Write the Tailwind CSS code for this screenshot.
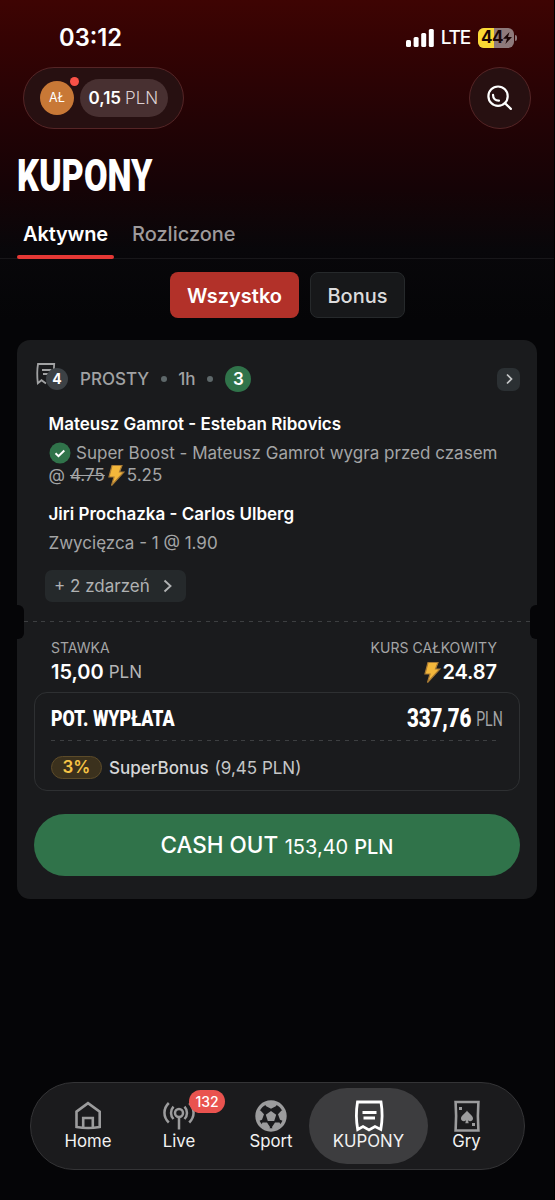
<!DOCTYPE html>
<html lang="pl">
<head>
<meta charset="utf-8">
<title>Kupony</title>
<script src="https://cdn.jsdelivr.net/npm/@tailwindcss/browser@4"></script>
</head>
<body class="bg-[#060608]">
<div class="relative flex h-[1200px] w-[555px] flex-col overflow-hidden border-r border-black bg-[linear-gradient(180deg,#3e0403_0px,#350303_40px,#230305_120px,#150306_190px,#08070a_250px,#050507_320px,#050507_100%)] font-['Inter',sans-serif] text-white">

  <!-- status bar -->
  <div class="flex h-[67px] items-center justify-between pt-[8px] pr-[37px] pl-[59px]">
    <span class="text-[23.700px] font-semibold leading-none">03:12</span>
    <div class="flex items-center">
      <svg class="h-[18px] w-[28px]" viewBox="0 0 28 18" fill="#fff"><rect x="0" y="11" width="5" height="7" rx="1.5"/><rect x="7.6" y="8" width="5" height="10" rx="1.5"/><rect x="15.2" y="4" width="5" height="14" rx="1.5"/><rect x="22.8" y="0" width="5" height="18" rx="1.5"/></svg>
      <span class="ml-[7px] text-[19px] font-medium leading-none tracking-[-1.200px]">LTE</span>
      <div class="relative ml-[8px] flex h-[20px] w-[36px] items-center overflow-hidden rounded-[6px] bg-[#8e7a7b]">
        <div class="h-full w-[16px] bg-[#fbd934]"></div>
        <span class="absolute left-[3px] text-[17px] font-bold leading-none tracking-[-0.500px] text-[#1a0505]">44</span>
        <svg class="absolute left-[25px] top-[4px] h-[12px] w-[9px]" viewBox="0 0 9 12" fill="#1a0505"><path d="M6.5 0 0 6.8h4L2.4 12 9 5H5z"/></svg>
      </div>
      <div class="ml-[1px] h-[6px] w-[2px] rounded-r-full bg-[#8e7a7b]"></div>
    </div>
  </div>

  <!-- account and search -->
  <div class="flex h-[62px] items-center justify-between pr-[23px] pl-[23px]">
    <div class="flex h-[62px] w-[161px] items-center rounded-full border border-[#552526] bg-[#271011] pl-[16px]">
      <div class="relative flex size-[34px] items-center justify-center rounded-full bg-[#c87836]">
        <span class="text-[12.5px] leading-none">AŁ</span>
        <div class="absolute -top-[4px] left-[30px] size-[9px] rounded-full bg-[#fa5147]"></div>
      </div>
      <div class="ml-[6px] flex h-[38px] w-[88px] items-center rounded-full bg-[#483031] pl-[8.500px] leading-none">
        <span class="text-[17px] font-semibold">0,15</span>
        <span class="ml-[4px] text-[17px] font-light text-[#dccfd0]">PLN</span>
      </div>
    </div>
    <div class="flex size-[62px] items-center justify-center rounded-full border border-[#552526] bg-[#271011]">
      <svg class="-mt-[1px] -ml-[1px] size-[27px]" viewBox="0 0 28 28" fill="none" stroke="#fff" stroke-width="2.3"><circle cx="12.5" cy="12.6" r="10"/><path d="m19.6 19.8 6.2 6M7.3 11.3c0 4 2.6 6.1 6.1 5.9" stroke-linecap="round"/></svg>
    </div>
  </div>

  <h1 class="flex h-[93px] items-center pl-[16.500px]"><span class="origin-left scale-x-76 font-['Roboto',sans-serif] text-[45px] font-black leading-none">KUPONY</span></h1>

  <!-- tabs -->
  <div class="-mt-[13px] flex h-[50px] shrink-0 border-b border-[#18171a] pl-[17px]">
    <div class="flex h-[50px] w-[97px] flex-col items-center justify-between pt-[15px]">
      <span class="text-[20px] font-semibold leading-none tracking-[-0.150px]">Aktywne</span>
      <div class="h-[4px] w-full rounded-full bg-[#e53835]"></div>
    </div>
    <div class="ml-[18px] pt-[15px]"><span class="block text-[20px] font-medium leading-none text-[#9e9a9b]">Rozliczone</span></div>
  </div>

  <!-- filters -->
  <div class="flex h-[81px] items-start pt-[13px] pl-[170px]">
    <div class="flex h-[46px] w-[129px] items-center justify-center rounded-[8px] bg-[#b23129] pt-[2px]"><span class="text-[20px] font-semibold">Wszystko</span></div>
    <div class="ml-[11px] flex h-[46px] w-[95px] items-center justify-center rounded-[8px] border border-[#26292b] bg-[#17181a] pt-[2px]"><span class="text-[20px] font-medium text-[#dcdcdd]">Bonus</span></div>
  </div>

  <!-- coupon -->
  <section class="relative ml-[17px] flex h-[559px] w-[520px] shrink-0 flex-col rounded-[13px] bg-[#1a1b1d] px-[17px] pt-[19px]">
    <header class="flex h-[40px] items-center">
      <div class="relative h-[32px] w-[35px]">
        <svg class="absolute left-[1px] top-[-1px] h-[24px] w-[22px]" viewBox="0 0 22 24" fill="none" stroke="#a1a2a3" stroke-width="1.800"><path d="M18.800 8 19.200 2H3C2 8 2 14 2.800 21.200l3.700-3 4.500 3.300M7 8h9.500M8 12h7"/></svg>
        <div class="absolute left-[12px] top-[5px] flex size-[22px] items-center justify-center rounded-full bg-[#3c4145]"><span class="text-[14px] font-bold leading-none">4</span></div>
      </div>
      <span class="ml-[11px] text-[17px] font-medium leading-none text-[#a1a2a3]">PROSTY</span>
      <div class="ml-[12px] size-[6px] rounded-full bg-[#5e686a]"></div>
      <span class="ml-[11px] text-[17px] font-medium leading-none text-[#a1a2a3]">1h</span>
      <div class="ml-[12px] size-[6px] rounded-full bg-[#5e686a]"></div>
      <div class="ml-[12px] flex size-[26px] items-center justify-center rounded-full bg-[#30734a]"><span class="text-[17px] font-semibold leading-none">3</span></div>
      <div class="ml-auto flex size-[23px] items-center justify-center rounded-[7px] bg-[#2b3033]"><svg class="size-[12px]" viewBox="0 0 12 12" fill="none" stroke="#c6c8c9" stroke-width="1.700"><path d="m4 1.500 4.500 4.500L4 10.500"/></svg></div>
    </header>

    <div class="flex flex-col pt-[13px] pl-[14.500px]">
      <div class="h-[24px] leading-[24px]"><span class="text-[17px] font-semibold">Mateusz Gamrot - Esteban Ribovics</span></div>
      <div class="mt-[5px] flex h-[23px] items-center">
        <svg class="size-[22px]" viewBox="0 0 22 22"><circle cx="11" cy="11" r="10.500" fill="#30734a"/><path d="m6.500 11.300 3 2.900 5.800-5.700" fill="none" stroke="#fff" stroke-width="2"/></svg>
        <span class="ml-[5.500px] pt-[2px] text-[17px] leading-none tracking-[0.020px] text-[#a4a5a6]">Super Boost - Mateusz Gamrot wygra przed czasem</span>
      </div>
      <div class="flex h-[23px] items-center text-[17px] leading-none text-[#a4a5a6]">
        <span>@</span><span class="ml-[5px] line-through">4.75</span>
        <svg class="ml-[3px] h-[21px] w-[17px]" viewBox="0 0 17 21"><path d="M4 .5h10L11.500 7H16L3.500 20.500 6 12H1z" fill="#f3b73b" stroke="#a87a34" stroke-width="1.200"/></svg>
        <span class="ml-[2px]">5.25</span>
      </div>
      <div class="mt-[15px] h-[24px] leading-[24px]"><span class="text-[17px] font-semibold">Jiri Prochazka - Carlos Ulberg</span></div>
      <div class="mt-[5px] h-[23px] leading-[24px]"><span class="text-[17px] text-[#a4a5a6]">Zwycięzca - 1 @ 1.90</span></div>
      <div class="mt-[16px] -ml-[3.500px] flex h-[32px] w-[141px] items-center rounded-[7px] bg-[#25292b] pl-[9px]">
        <span class="text-[17px] leading-none text-[#b0b2b3]">+ 2 zdarzeń</span>
        <svg class="ml-[13px] h-[14px] w-[10px]" viewBox="0 0 10 14" fill="none" stroke="#b0b2b3" stroke-width="1.900"><path d="m1.500 1.500 6 5.500-6 5.500"/></svg>
      </div>
    </div>

    <!-- perforation -->
    <div class="-mx-[17px] mt-[3px] flex h-[34px] shrink-0 items-center">
      <div class="h-[34px] w-[7px] rounded-r-[6px] bg-[#050507]"></div>
      <div class="mb-px h-px flex-1 bg-[repeating-linear-gradient(90deg,#3d3f41_0px,#3d3f41_4px,transparent_4px,transparent_8.650px)]"></div>
      <div class="h-[34px] w-[7px] rounded-l-[6px] bg-[#050507]"></div>
    </div>

    <div class="flex justify-between pr-[23px] pl-[17px]">
      <div>
        <div class="flex h-[18px] items-center"><span class="text-[14px] leading-none text-[#a4a5a6]">STAWKA</span></div>
        <div class="mt-[3px] flex h-[24px] items-center leading-none"><span class="text-[20px] font-semibold">15,00</span><span class="ml-[5px] pt-px text-[17px] text-[#b4b5b6]">PLN</span></div>
      </div>
      <div class="flex flex-col items-end">
        <div class="flex h-[18px] items-center"><span class="text-[14px] leading-none tracking-[0.060px] text-[#a4a5a6]">KURS CAŁKOWITY</span></div>
        <div class="mt-[3px] flex h-[24px] items-center">
          <svg class="h-[21px] w-[17px]" viewBox="0 0 17 21"><path d="M4 .5h10L11.500 7H16L3.500 20.500 6 12H1z" fill="#f3b73b" stroke="#a87a34" stroke-width="1.200"/></svg>
          <span class="ml-[2px] text-[20px] font-semibold leading-none tracking-[-0.100px]">24.87</span>
        </div>
      </div>
    </div>

    <div class="mt-[8px] flex h-[99px] w-[486px] shrink-0 flex-col rounded-[13px] border border-[#2e3032] px-[16px]">
      <div class="flex h-[48px] items-center justify-between font-['Roboto',sans-serif] leading-none">
        <span class="origin-left scale-x-79 pt-[4px] text-[22.500px] font-black">POT. WYPŁATA</span>
        <div class="flex origin-right scale-x-82 items-center pt-[4px]"><span class="text-[25px] font-black tracking-[-0.150px]">337,76</span><span class="ml-[1px] origin-right scale-x-86 pt-[2px] text-[20px] text-[#a4a5a6]">PLN</span></div>
      </div>
      <div class="h-px w-[450px] bg-[repeating-linear-gradient(90deg,#3d3f41_0px,#3d3f41_4px,transparent_4px,transparent_8.650px)]"></div>
      <div class="flex h-[50px] items-center pt-[4px] leading-none">
        <div class="flex h-[23px] w-[51px] items-center justify-center rounded-full border border-[#5c4b29] bg-[#3b311d]"><span class="text-[17px] font-semibold text-[#f6c445]">3%</span></div>
        <span class="ml-[7px] pt-[2px] text-[17px] font-medium text-[#d5d6d7]">SuperBonus</span>
        <span class="ml-[6px] pt-[2px] text-[17px] text-[#c5c6c7]">(9,45 PLN)</span>
      </div>
    </div>

    <button class="mt-[23px] flex h-[62px] w-[486px] shrink-0 items-center justify-center rounded-full bg-[#30734a] pt-px leading-none">
      <span class="text-[22.500px] font-medium">CASH OUT</span><span class="ml-[6.500px] pt-[2px] text-[20px]">153,40</span><span class="ml-[6px] pt-[2px] text-[20px] font-medium">PLN</span>
    </button>
  </section>

  <!-- bottom navigation -->
  <nav class="mt-[183px] ml-[30px] flex h-[88px] w-[495px] shrink-0 items-center rounded-full border border-[#343436] bg-[#1b1b1d] text-[16.800px] leading-none text-[#f2f2f2]">
    <div class="ml-[16px] flex h-[76px] w-[82px] flex-col items-center pt-[12px]">
      <svg class="h-[32px] w-[32px]" viewBox="0 0 32 32" fill="none" stroke="#9c9c9d" stroke-width="2.600"><path d="M4.500 11.600 16 3.200l11.700 8.400v15.400c-7.500 1.300-15.700 1.300-23.200 0zM11.200 28V18h9.600v10"/></svg>
      <span class="mt-px">Home</span>
    </div>
    <div class="relative ml-[10px] flex h-[76px] w-[80px] flex-col items-center pt-[12px]">
      <svg class="h-[32px] w-[34px]" viewBox="0 0 34 32" fill="none" stroke="#9c9c9d" stroke-width="2.500"><circle cx="17" cy="13" r="4"/><path d="M17 17v12.500M11.500 19c-3.300-3.500-3.300-8.700 0-12.300M22.500 19c3.300-3.500 3.300-8.700 0-12.300M6.800 22.500C1 17 1 8.500 6.800 3M27.200 22.500c5.800-5.500 5.800-14 0-19.500"/></svg>
      <span class="mt-px">Live</span>
      <div class="absolute left-[50px] top-[2px] flex h-[23px] w-[36px] items-center justify-center rounded-full bg-[#e9534f]"><span class="text-[14px] font-medium text-white">132</span></div>
    </div>
    <div class="ml-[12px] flex h-[76px] w-[80px] flex-col items-center pt-[12px]">
      <svg class="h-[32px] w-[32px]" viewBox="0 0 32 32"><circle cx="16" cy="16" r="14" fill="none" stroke="#9c9c9d" stroke-width="3.400"/><g fill="#9c9c9d"><path d="m16 11 5.200 3.800-2 6.100h-6.400l-2-6.100zM9 3C12 1 20 1 23 3L20.800 6.300 16 8.800 11.200 6.300zM1.500 12 5.500 10.500 9 14.300 7 19.800l-4.500 1.700zM30.500 12 26.500 10.500 23 14.300 25 19.800l4.500 1.700zM5.500 26.500 7.500 22.500h4.500l3 4.500-1 3.500zM26.500 26.500 24.500 22.500h-4.500l-3 4.500 1 3.500z"/></g></svg>
      <span class="mt-px">Sport</span>
    </div>
    <div class="-ml-[2px] flex h-[76px] w-[119px] flex-col items-center rounded-[38px] bg-[#3d3d3f] pt-[12px]">
      <svg class="h-[32px] w-[32px]" viewBox="0 0 32 32" fill="none" stroke="#fff" stroke-width="2.800"><path d="M4.500 2h23.500C29.500 11 29.500 20 27.800 29.500L22 26.500 16 30 10 26.500 4.700 29.500C3 20 3 11 4.500 2zM9.500 12.500h14M10.500 18h11.500"/></svg>
      <span class="mt-px">KUPONY</span>
    </div>
    <div class="flex h-[76px] w-[77px] flex-col items-center pt-[12px]">
      <svg class="h-[32px] w-[28px]" viewBox="0 0 28 32"><path d="M2.600 2h22.800c-.7 9-.7 18 0 28.500H2.600C3.300 20 3.300 11 2.600 2z" fill="none" stroke="#9c9c9d" stroke-width="2.600"/><path d="M14 10.500c1 2.500 6 4.800 6 8 0 2.700-3.500 3.500-5 1.700l.7 3h-3.400l.7-3c-1.500 1.800-5 1-5-1.700 0-3.200 5-5.500 6-8zM6 7h3v3H6zM19 23h3v3h-3z" fill="#9c9c9d"/></svg>
      <span class="mt-px">Gry</span>
    </div>
  </nav>
</div>
</body>
</html>
